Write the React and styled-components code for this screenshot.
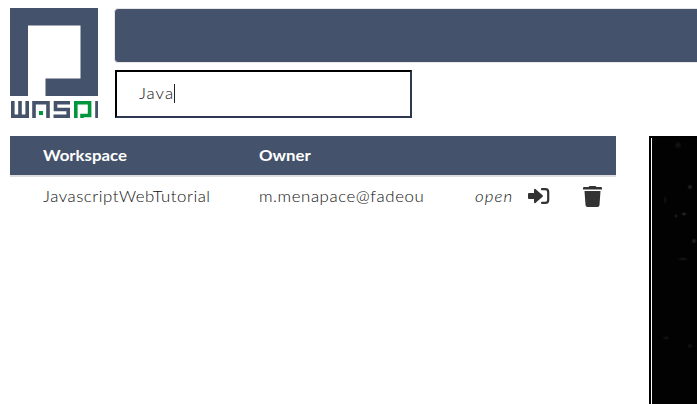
import React from 'react';
import styled, { createGlobalStyle } from 'styled-components';

const Global = createGlobalStyle`
  * { box-sizing: border-box; }
  body { margin: 0; background: #fff; overflow: hidden; font-family: Lato, "Open Sans", sans-serif; color: #111; font-size: 16px; font-weight: 300; }
`;
const Page = styled.div`width: 697px; height: 404px; overflow: hidden; padding: 8px 0 0 10px;`;
const Header = styled.header`display: flex; align-items: flex-start; height: 128px;`;
const Logo = styled.svg`display: block; flex: none; width: 88px; height: 110px; margin-right: 16px;`;
const Tools = styled.div`flex: none; width: 600px;`;
const Navbar = styled.nav`height: 55px; border: 1px solid #e7e7e7; border-radius: 4px; background: #44526b;`;
const Search = styled.div`
  display: flex; align-items: center; width: 297px; height: 48px; margin: 7px 0 0 1px; padding: 0 0 2px 22px;
  border: 2px solid; border-color: #000 #2d3850 #2d3850 #000;
`;
const Query = styled.div`display: flex; align-items: center; width: 36px; justify-content: space-between;`;
const Caret = styled.i`flex: none; width: 1px; height: 19px; background: #222;`;
const Text = styled.span`
  display: block; white-space: nowrap; line-height: 20px; justify-self: start;
  font-size: 15px; font-weight: ${p => p.$weight || 300};
  font-style: ${p => p.$italic ? 'italic' : 'normal'};
  letter-spacing: ${p => p.$spacing || 0}px;
  transform: scaleX(1.12); transform-origin: left center;
`;
const Content = styled.main`display: flex; align-items: flex-start; gap: 33px;`;
const Table = styled.section`flex: none; width: 606px;`;
const Row = styled.div`display: grid; grid-template-columns: 216px 216px 53px 1fr; padding-left: 33px; align-items: center; height: 38px;`;
const HeadRow = styled(Row)`height: 41px; padding-bottom: 2px; background: #44526b; color: #fff; border-bottom: 2px solid #ddd;`;
const Actions = styled.div`display: flex; align-items: center; gap: 33px;`;
const Icon = styled.svg`display: block; flex: none; fill: #333; width: ${p => p.$w}px; height: ${p => p.$h}px;`;
const Preview = styled.aside`flex: none; width: 200px; height: 300px; border: 2px solid #000; padding: 0 0 0 1px; background: #fff;`;
const Screen = styled.div`
  height: 100%;
  background:
    radial-gradient(ellipse 3px 2px at 32px 76px, #303030, transparent),
    radial-gradient(circle 2px at 24px 78px, #282828, transparent),
    radial-gradient(circle 3px at 38px 49px, #292929, transparent),
    radial-gradient(circle 4px at 26px 7px, #181818, transparent),
    radial-gradient(circle 3px at 42px 103px, #272727, transparent),
    radial-gradient(ellipse 6px 2px at 31px 121px, #191919, transparent),
    radial-gradient(ellipse 2px 5px at 13px 62px, #141414, transparent),
    radial-gradient(ellipse 4px 2px at 14px 200px, #161616, transparent),
    radial-gradient(circle 3px at 38px 208px, #151515, transparent),
    #020202;
`;

export default function App() {
  return (
    <Page>
      <Global />
      <Header>
        <Logo viewBox="0 0 88 110">
          <path fill="#44526b" d="M0 0H88V88H35.5V70.5H70.5V17.5H18V88H0Z" />
          <g fill="none" stroke="#44526b" strokeWidth="3.6">
            <path d="M2.8 93V108.2H17.2V93M10 93V108" />
            <path d="M24 110V94.8H38V110" />
            <path d="M60 94.8H45.5V101.5H58.2V108.2H43.5" />
            <path d="M87 93V110" />
          </g>
          <path fill="none" stroke="#00963c" strokeWidth="3.6" d="M65.8 110V94.8H79.6V107.5H72V110" />
          <rect x="29" y="103" width="4" height="4" fill="#00963c" />
        </Logo>
        <Tools>
          <Navbar />
          <Search><Query><Text $spacing={0.9}>Java</Text><Caret /></Query></Search>
        </Tools>
      </Header>
      <Content>
        <Table>
          <HeadRow><Text $weight={700}>Workspace</Text><Text $weight={700}>Owner</Text></HeadRow>
          <Row>
            <Text $spacing={0.48}>JavascriptWebTutorial</Text>
            <Text $spacing={0.52}>m.menapace@fadeou</Text>
            <Text $italic $spacing={1}>open</Text>
            <Actions>
              <Icon $w={22} $h={16} viewBox="0 0 22 16">
                <path d="M0 6Q0 5 1 5H6V1.8Q6.2 .4 7.4 1L14.6 7.2Q15.4 8 14.6 8.8L7.4 15Q6.2 15.6 6 14.2V11H1Q0 11 0 10Z" />
                <path d="M14 1.2H17.5Q20.2 1.2 20.2 4V12Q20.2 14.8 17.5 14.8H14" fill="none" stroke="#333" strokeWidth="2.2" strokeLinecap="round" />
              </Icon>
              <Icon $w={19} $h={21} viewBox="0 0 19 21">
                <path d="M1 1H5.5L6.5 0H12.5L13.5 1H18Q19 1 19 2V3.5H0V2Q0 1 1 1ZM1.5 5H17.5L16.5 19Q16.4 21 14.5 21H4.5Q2.6 21 2.5 19Z" />
              </Icon>
            </Actions>
          </Row>
        </Table>
        <Preview><Screen /></Preview>
      </Content>
    </Page>
  );
}
